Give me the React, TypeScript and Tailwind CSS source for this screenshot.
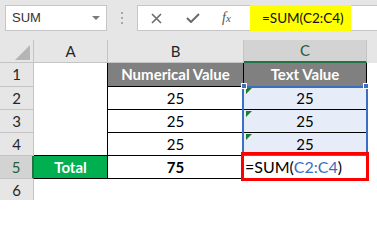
import React from "react";

const hdrBorder = "border-[#c4c4c4]";

function RowHeader({ n, h, selected }: { n: number; h: string; selected?: boolean }) {
  return (
    <div
      className={`w-[34px] shrink-0 ${h} flex items-center justify-center text-[15px] border-b ${hdrBorder} ${
        selected ? "bg-[#d3d3d3] border-r-2 border-r-[#217346] text-[#1e5e3b]" : "bg-[#e6e6e6] border-r text-[#262626]"
      }`}
    >
      {n}
    </div>
  );
}

function GreenTri() {
  return (
    <svg className="absolute left-[2px] top-[1px]" width="6" height="6" viewBox="0 0 6 6">
      <polygon points="0,0 6,0 0,6" fill="#1f7a34" />
    </svg>
  );
}

export default function App() {
  return (
    <div className="w-[377px] h-[200px] bg-[#e6e6e6] overflow-hidden relative font-[Lato,sans-serif] text-black">
      {/* formula bar */}
      <div className="h-[40px] flex items-start pt-[5px]">
        <div className="ml-[5px] w-[102px] h-[26px] bg-white border border-[#c6c6c6] flex items-center justify-between pl-[6px] pr-[6px] shrink-0">
          <span className="text-[13px] text-[#333] font-['Liberation_Sans',sans-serif]">SUM</span>
          <svg width="8" height="5" viewBox="0 0 8 5">
            <polygon points="0,0 8,0 4,4" fill="#7a7a7a" />
          </svg>
        </div>
        <div className="w-[30px] h-[26px] flex flex-col items-center justify-center gap-[3px] shrink-0">
          <div className="w-[2px] h-[2px] bg-[#a8a8a8]" />
          <div className="w-[2px] h-[2px] bg-[#a8a8a8]" />
          <div className="w-[2px] h-[2px] bg-[#a8a8a8]" />
        </div>
        <div className="flex-1 h-[26px] bg-white border border-[#c6c6c6] border-r-0 flex items-stretch">
          <div className="w-[112px] shrink-0 flex items-center">
            <svg className="ml-[13px]" width="11" height="11" viewBox="0 0 11 11">
              <path d="M1 1 L10 10 M10 1 L1 10" stroke="#6b6b6b" strokeWidth="1.6" />
            </svg>
            <svg className="ml-[24px]" width="14" height="10" viewBox="0 0 14 10">
              <path d="M1 5 L5 9 L13 1" stroke="#6b6b6b" strokeWidth="2" fill="none" />
            </svg>
            <span className="ml-[22px] text-[14px] italic text-[#555] font-['Liberation_Serif',serif] leading-none">
              f<span className="text-[11px]">x</span>
            </span>
          </div>
          <div className="w-[101px] -my-px bg-[#ffff00] flex items-center pl-[12px] text-[13.5px] text-[#111]">
            =SUM(C2:C4)
          </div>
        </div>
      </div>

      {/* column headers */}
      <div className="flex h-[23px]">
        <div className={`w-[34px] shrink-0 border-r border-b ${hdrBorder} relative`}>
          <svg className="absolute left-[15px] top-[5px]" width="15" height="15" viewBox="0 0 15 15">
            <polygon points="0,15 15,15 15,0" fill="#b5b5b5" />
          </svg>
        </div>
        <div className={`w-[74px] shrink-0 border-r border-b ${hdrBorder} flex items-center justify-center text-[15px] text-[#262626]`}>
          A
        </div>
        <div className={`w-[136px] shrink-0 border-r border-b ${hdrBorder} flex items-center justify-center text-[15px] text-[#262626]`}>
          B
        </div>
        <div className={`w-[123px] shrink-0 bg-[#d3d3d3] border-r ${hdrBorder} border-b-2 border-b-[#217346] flex items-center justify-center text-[15px] text-[#1e5e3b]`}>
          C
        </div>
        <div className="flex-1" />
      </div>

      {/* row 1 */}
      <div className="flex h-[24px]">
        <RowHeader n={1} h="h-[24px]" />
        <div className="w-[74px] shrink-0 bg-white border-r border-black" />
        <div className="w-[136px] shrink-0 bg-[#808080] border-r border-b border-black flex items-center justify-center text-white font-bold text-[15px]">
          Numerical Value
        </div>
        <div className="w-[123px] shrink-0 bg-[#808080] border-r border-b border-black flex items-center justify-center text-white font-bold text-[15px]">
          Text Value
        </div>
        <div className="flex-1 bg-white" />
      </div>

      {[2, 3, 4].map((n) => (
        <div key={n} className="flex h-[23px]">
          <RowHeader n={n} h="h-[23px]" />
          <div className={`w-[74px] shrink-0 bg-white border-r border-black ${n === 4 ? "border-b" : ""}`} />
          <div className="w-[136px] shrink-0 bg-white border-r border-b border-black flex items-center justify-center text-[15px]">
            25
          </div>
          <div className="w-[123px] shrink-0 bg-[#e6edf8] border-r border-b border-black flex items-center justify-center text-[15px] relative">
            <GreenTri />
            25
          </div>
          <div className="flex-1 bg-white" />
        </div>
      ))}

      {/* row 5 */}
      <div className="flex h-[23px]">
        <RowHeader n={5} h="h-[23px]" selected />
        <div className="w-[74px] shrink-0 bg-[#00b050] border-r border-b border-black flex items-center justify-center text-white font-bold text-[15px]">
          Total
        </div>
        <div className="w-[136px] shrink-0 bg-white border-r border-b border-black flex items-center justify-center font-bold text-[15px]">
          75
        </div>
        <div className="w-[123px] shrink-0 bg-white border-r border-b border-black flex items-center pl-[1px] text-[16px]">
          =SUM(<span className="text-[#3a6cc0]">C2:C4</span>)
        </div>
        <div className="flex-1 bg-white" />
      </div>

      {/* row 6 */}
      <div className="flex h-[23px]">
        <RowHeader n={6} h="h-[23px]" />
        <div className="flex-1 bg-white" />
      </div>

      {/* selection overlay */}
      <div className="absolute left-[242px] top-[86px] w-[126px] h-[70px] border-2 border-[#3b6fc4] pointer-events-none" />
      <div className="absolute left-[241px] top-[83px] w-[6px] h-[6px] bg-[#3b6fc4] border border-white" />
      <div className="absolute left-[363px] top-[83px] w-[6px] h-[6px] bg-[#3b6fc4] border border-white" />

      {/* red annotation box */}
      <div className="absolute left-[241px] top-[152px] w-[128px] h-[29px] border-[3px] border-[#ff0000] pointer-events-none" />
    </div>
  );
}
